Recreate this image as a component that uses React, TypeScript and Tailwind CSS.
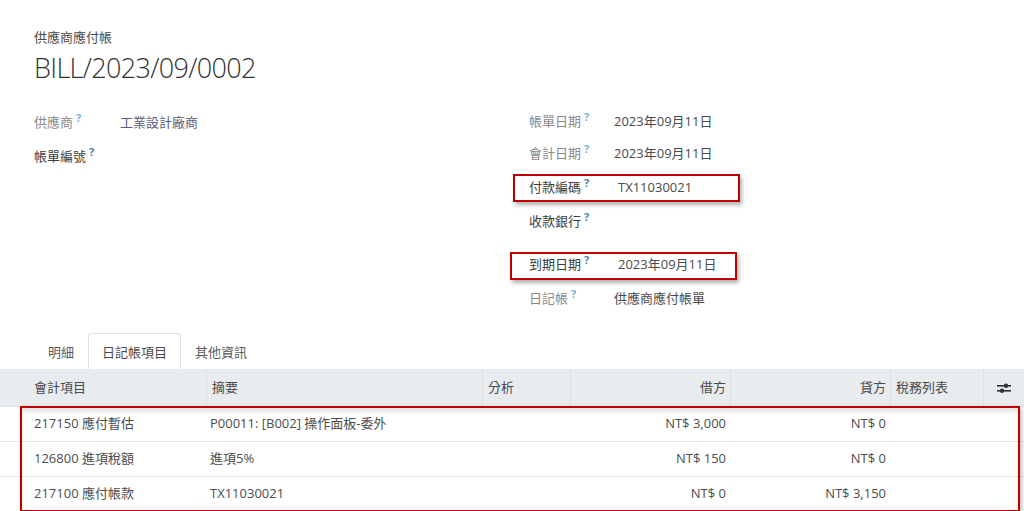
import React from "react";

const Q = ({ light }: { light?: boolean }) => (
  <sup className={`ml-[3px] text-[11px] font-bold ${light ? "text-[#7ab0d6]" : "text-[#4f7fa8]"}`}>?</sup>
);

function Field({
  label,
  value,
  strong,
  boxed,
  valueShift,
  className = "",
}: {
  label: string;
  value?: string;
  strong?: boolean;
  boxed?: string;
  valueShift?: boolean;
  className?: string;
}) {
  return (
    <div className={`relative flex h-[32px] items-center ${className}`}>
      {boxed && <div className={`pointer-events-none absolute border-2 border-[#c00000] shadow-[2px_3px_4px_rgba(0,0,0,0.3)] ${boxed}`} />}
      <div className={`w-[85px] shrink-0 ${strong ? "text-[#3d3d3d]" : "text-[#8a8a8a]"}`}>
        {label}
        <Q light={!strong} />
      </div>
      <div className={`text-[#4a4a4a] ${valueShift ? "pl-[4px]" : ""}`}>{value}</div>
    </div>
  );
}

const cols = [
  { w: "w-[206px]", label: "會計項目", pad: "pl-[34px]" },
  { w: "w-[276px]", label: "摘要", pad: "pl-[5px]" },
  { w: "w-[88px]", label: "分析", pad: "pl-[5px]" },
  { w: "w-[160px]", label: "借方", pad: "pr-[4px] justify-end" },
  { w: "w-[160px]", label: "貸方", pad: "pr-[4px] justify-end" },
  { w: "w-[93px]", label: "稅務列表", pad: "pl-[5px]" },
];

const rows = [
  { acc: "217150 應付暫估", memo: "P00011: [B002] 操作面板-委外", debit: "NT$ 3,000", credit: "NT$ 0" },
  { acc: "126800 進項稅額", memo: "進項5%", debit: "NT$ 150", credit: "NT$ 0" },
  { acc: "217100 應付帳款", memo: "TX11030021", debit: "NT$ 0", credit: "NT$ 3,150" },
];

export default function App() {
  return (
    <div className="h-[511px] w-[1024px] overflow-hidden bg-white font-['Open_Sans','Noto_Sans_CJK_TC',sans-serif] text-[13px] text-[#4a4a4a]">
      <div className="px-[34px] pt-[28px]">
        <div className="h-[18px] leading-[18px] text-[#4a4a4a]">供應商應付帳</div>
        <div className="mt-[6px] text-[27px] font-light leading-[32px] tracking-[-0.025em] text-[#333]">BILL/2023/09/0002</div>
      </div>

      <div className="mt-[22px] flex">
        <div className="w-[529px] pl-[34px] pt-[1px]">
          <div className="flex h-[32px] items-center">
            <div className="w-[86px] shrink-0 text-[#8a8a8a]">
              供應商
              <Q light />
            </div>
            <div className="text-[#5a5a7a]">工業設計廠商</div>
          </div>
          <div className="mt-[2px] flex h-[32px] items-center text-[#3d3d3d]">
            帳單編號
            <Q />
          </div>
        </div>
        <div className="flex-1">
          <Field label="帳單日期" value="2023年09月11日" />
          <Field label="會計日期" value="2023年09月11日" />
          <Field
            label="付款編碼"
            value="TX11030021"
            strong
            valueShift
            className="mt-[2px]"
            boxed="left-[-16px] top-[2px] h-[28px] w-[227px]"
          />
          <Field label="收款銀行" strong className="mt-[2px]" />
          <Field
            label="到期日期"
            value="2023年09月11日"
            strong
            valueShift
            className="mt-[11px]"
            boxed="left-[-19px] top-[3px] h-[28px] w-[227px]"
          />
          <Field label="日記帳" value="供應商應付帳單" className="mt-[2px]" />
        </div>
      </div>

      <div className="mt-[18px] flex h-[36px] items-end pl-[34px]">
        <div className="flex h-[35px] items-center px-[14px] pt-[2px] text-[#5a5a5a]">明細</div>
        <div className="flex h-[36px] items-center rounded-t-[3px] border border-b-0 border-[#dee2e6] bg-white px-[13px] pt-[2px] text-[#4a4a4a]">
          日記帳項目
        </div>
        <div className="flex h-[35px] items-center px-[14px] pt-[2px] text-[#5a5a5a]">其他資訊</div>
      </div>

      <div className="flex h-[38px] border-b border-[#dcdfe3] bg-[#e9ecef] text-[#4a4a4a]">
        {cols.map((c, i) => (
          <div key={c.label} className={`flex items-center ${c.w} ${c.pad} ${i > 0 ? "border-l border-[#dcdfe3]" : ""}`}>
            {c.label}
          </div>
        ))}
        <div className="flex flex-1 items-center justify-center border-l border-[#dcdfe3]">
          <svg width="14" height="12" viewBox="0 0 14 12" fill="#333">
            <rect x="0" y="3" width="14" height="1.6" />
            <circle cx="9" cy="3.8" r="2.2" />
            <rect x="0" y="8" width="14" height="1.6" />
            <circle cx="5" cy="8.8" r="2.2" />
          </svg>
        </div>
      </div>

      <div className="relative">
        <div className="pointer-events-none absolute left-[20px] top-[-1px] h-[106px] w-[1000px] border-2 border-[#c00000] shadow-[inset_0_4px_4px_rgba(0,0,0,0.1),2px_2px_4px_rgba(0,0,0,0.25)]" />
        {rows.map((r) => (
          <div key={r.acc} className="flex h-[35px] border-b border-[#e7e9ec] text-[#4d4d4d]">
            <div className="flex w-[206px] items-center pl-[34px]">{r.acc}</div>
            <div className="flex w-[276px] items-center pl-[4px]">{r.memo}</div>
            <div className="w-[88px]" />
            <div className="flex w-[160px] items-center justify-end pr-[4px]">{r.debit}</div>
            <div className="flex w-[160px] items-center justify-end pr-[4px]">{r.credit}</div>
            <div className="flex-1" />
          </div>
        ))}
      </div>
    </div>
  );
}
